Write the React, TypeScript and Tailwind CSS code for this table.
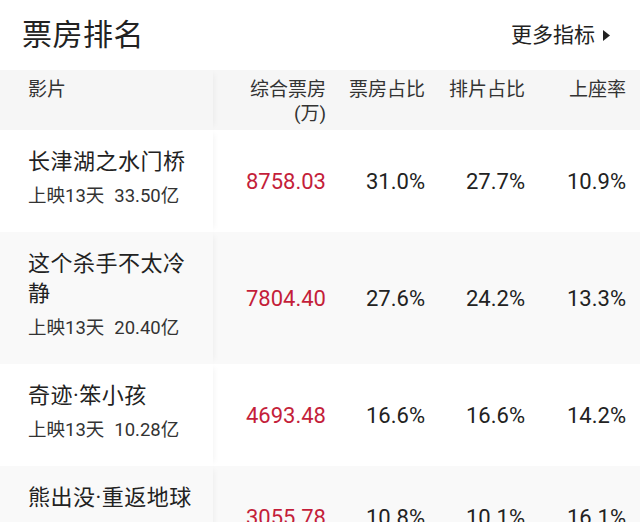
const rows = [
  { name: "长津湖之水门桥", days: "上映13天", total: "33.50亿", box: "8758.03", share: "31.0%", sched: "27.7%", seat: "10.9%" },
  { name: "这个杀手不太冷静", days: "上映13天", total: "20.40亿", box: "7804.40", share: "27.6%", sched: "24.2%", seat: "13.3%" },
  { name: "奇迹·笨小孩", days: "上映13天", total: "10.28亿", box: "4693.48", share: "16.6%", sched: "16.6%", seat: "14.2%" },
  { name: "熊出没·重返地球", days: "上映13天", total: "9.12亿", box: "3055.78", share: "10.8%", sched: "10.1%", seat: "16.1%" },
];

const font = { fontFamily: '"Roboto", "Noto Sans CJK SC", sans-serif' };

export default function App() {
  return (
    <div className="w-[640px] h-[522px] overflow-hidden bg-white text-[#222]" style={font}>
      <div className="h-[70px] flex items-center justify-between pl-[22px] pr-[30px]">
        <h1 className="text-[30px] leading-none tracking-[0.5px]">票房排名</h1>
        <div className="flex items-center gap-[8px] text-[21px] leading-none">
          <span>更多指标</span>
          <svg width="7" height="11" viewBox="0 0 7 11">
            <path d="M0 0 L7 5.5 L0 11 Z" fill="#222" />
          </svg>
        </div>
      </div>

      <div className="flex bg-[#f6f6f6] h-[60px] text-[19px] leading-[24px] text-[#333]">
        <div className="w-[213px] pl-[28px] pt-[8px] relative z-10 bg-[#f6f6f6] shadow-[5px_0_6px_-4px_rgba(0,0,0,0.05)]">影片</div>
        <div className="w-[127px] pr-[14px] pt-[8px] flex flex-col items-end">
          <span>综合票房</span>
          <span>(万)</span>
        </div>
        <div className="w-[99px] pr-[14px] pt-[8px] text-right">票房占比</div>
        <div className="w-[100px] pr-[14px] pt-[8px] text-right">排片占比</div>
        <div className="flex-1 pr-[14px] pt-[8px] text-right">上座率</div>
      </div>

      {rows.map((r, i) => {
        const bg = i % 2 === 1 ? "bg-[#f9f9f9]" : "bg-white";
        return (
          <div key={r.name} className={`flex items-stretch ${bg}`}>
            <div className={`w-[213px] pl-[28px] pt-[17px] pb-[23px] relative z-10 ${bg} shadow-[5px_0_6px_-4px_rgba(0,0,0,0.05)]`}>
              <div className="w-[172px] text-[22px] leading-[30px] tracking-[0.5px]">{r.name}</div>
              <div className="mt-[6px] text-[18.5px] leading-[26px] text-[#333]">
                {r.days}
                <span className="ml-[10px]">{r.total}</span>
              </div>
            </div>
            <div className="w-[127px] pr-[14px] flex items-center justify-end text-[22px] text-[#c41e3a]">{r.box}</div>
            <div className="w-[99px] pr-[14px] flex items-center justify-end text-[22px]">{r.share}</div>
            <div className="w-[100px] pr-[14px] flex items-center justify-end text-[22px]">{r.sched}</div>
            <div className="flex-1 pr-[14px] flex items-center justify-end text-[22px]">{r.seat}</div>
          </div>
        );
      })}
    </div>
  );
}
